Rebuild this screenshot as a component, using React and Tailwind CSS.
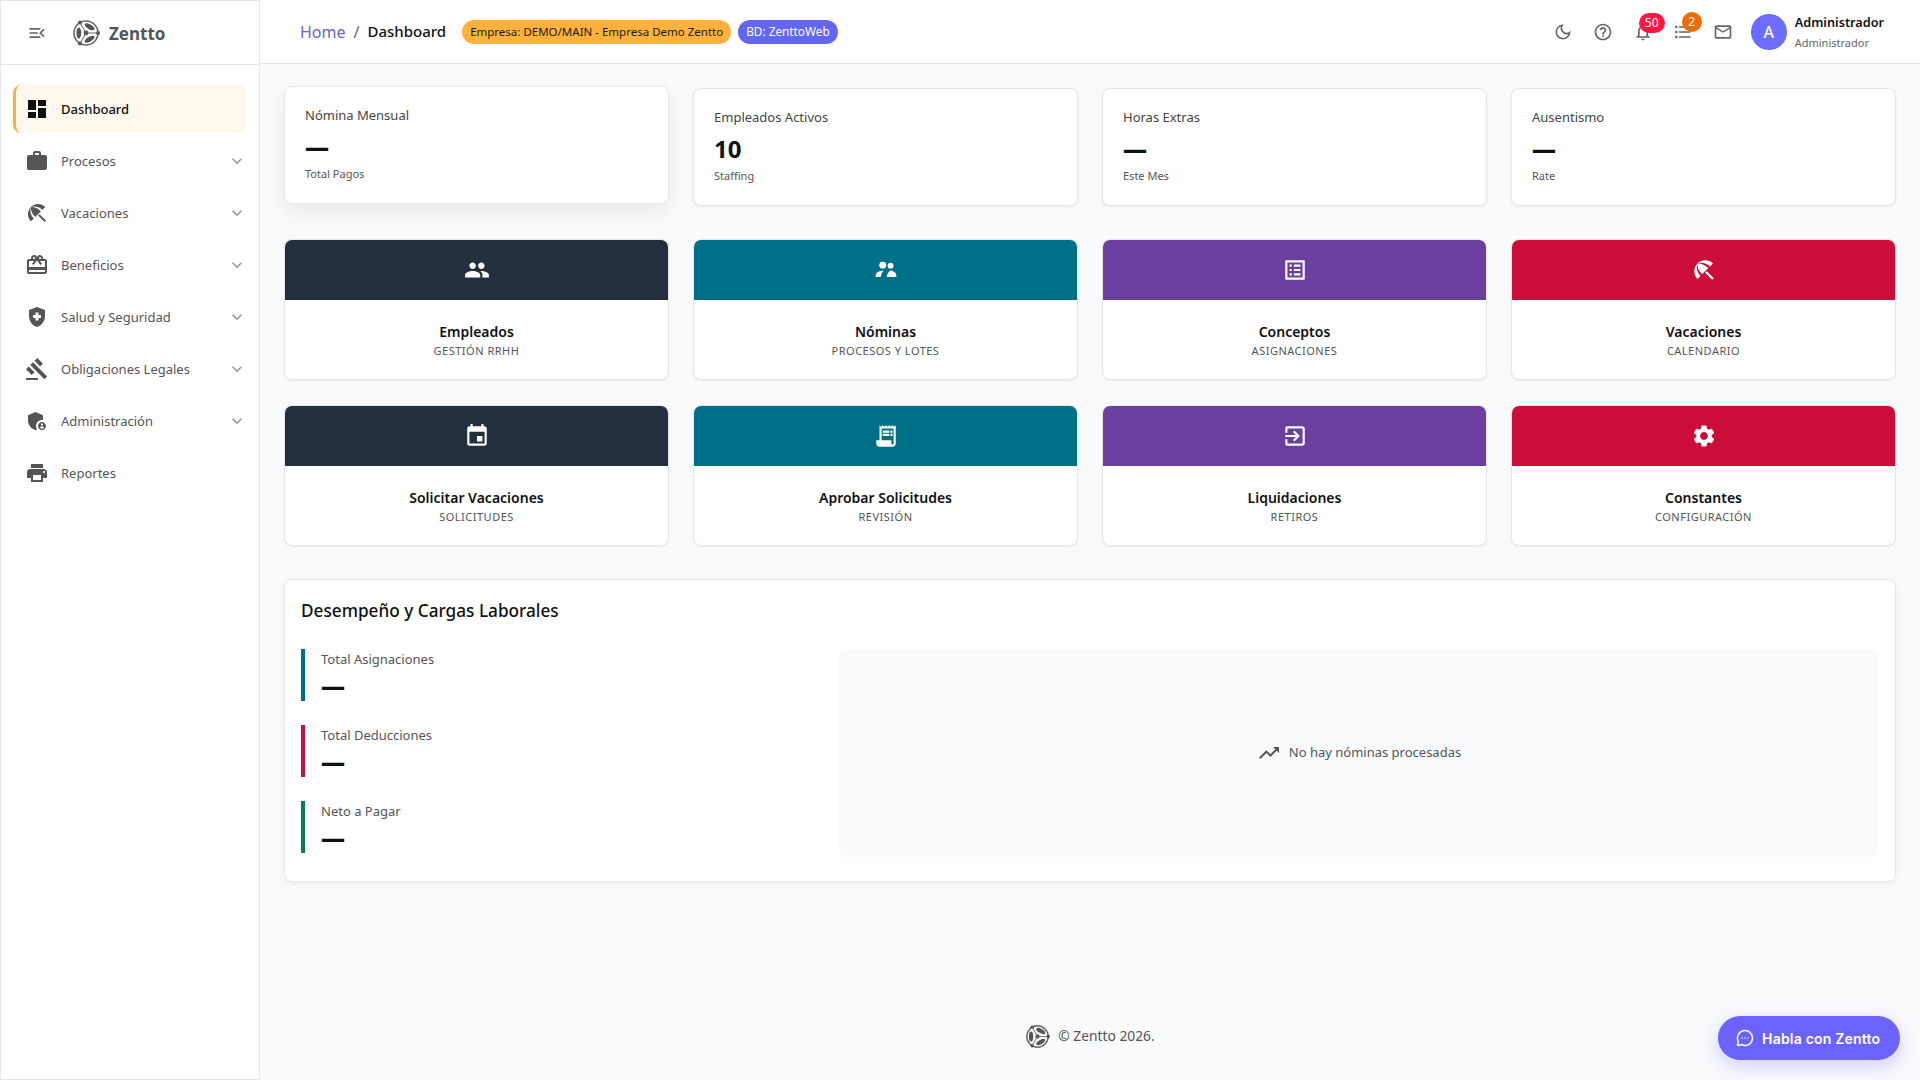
import React from "react";
import {
  MdMenuOpen, MdDashboard, MdWork, MdBeachAccess, MdRedeem, MdHealthAndSafety, MdGavel,
  MdAdminPanelSettings, MdPrint, MdExpandMore, MdOutlineDarkMode, MdHelpOutline, MdNotificationsNone,
  MdFormatListBulleted, MdMailOutline, MdPeople, MdOutlineListAlt, MdEvent, MdReceiptLong,
  MdOutlineExitToApp, MdSettings, MdTrendingUp,
} from "react-icons/md";
import { MessageCircleMore } from "lucide-react";

function Logo({ className }) {
  return (
    <svg viewBox="0 0 28 28" className={className} fill="none">
      <circle cx="14" cy="14" r="12" stroke="#666" strokeWidth="1.6" />
      <g fill="#555">
        <ellipse cx="6.8" cy="14" rx="2.4" ry="5.6" />
        <ellipse cx="17.6" cy="7.8" rx="2.4" ry="5.6" transform="rotate(120 17.6 7.8)" />
        <ellipse cx="17.6" cy="20.2" rx="2.4" ry="5.6" transform="rotate(60 17.6 20.2)" />
        <circle cx="26" cy="14" r="2" />
        <circle cx="8" cy="3.6" r="2" />
        <circle cx="8" cy="24.4" r="2" />
        <circle cx="14" cy="14" r="2.4" />
      </g>
      <path d="M14 14 L26 14 M14 14 L8 3.6 M14 14 L8 24.4" stroke="#666" strokeWidth="1" />
    </svg>
  );
}

function TeamIcon({ className }) {
  return (
    <svg viewBox="0 0 24 24" className={className} fill="currentColor">
      <circle cx="9" cy="7.5" r="3.2" />
      <circle cx="16.2" cy="8" r="2.7" />
      <path d="M2.5 18.5 v-1.6 C2.5 14.2 6 12.6 9.8 12.4 C8.4 14 7.4 16 7.2 18.5 Z" />
      <path d="M12.6 18.5 H21.5 V17 C21.5 14.6 18.6 12.4 16 12.4 C14.2 13.6 13 16 12.6 18.5 Z" />
    </svg>
  );
}

const nav = [
  { label: "Procesos", Icon: MdWork },
  { label: "Vacaciones", Icon: MdBeachAccess },
  { label: "Beneficios", Icon: MdRedeem },
  { label: "Salud y Seguridad", Icon: MdHealthAndSafety },
  { label: "Obligaciones Legales", Icon: MdGavel },
  { label: "Administración", Icon: MdAdminPanelSettings },
  { label: "Reportes", Icon: MdPrint, noChevron: true },
];

const stats = [
  { label: "Nómina Mensual", value: "—", sub: "Total Pagos", lifted: true },
  { label: "Empleados Activos", value: "10", sub: "Staffing" },
  { label: "Horas Extras", value: "—", sub: "Este Mes" },
  { label: "Ausentismo", value: "—", sub: "Rate" },
];

const actions = [
  { title: "Empleados", sub: "Gestión RRHH", Icon: MdPeople, bg: "bg-[#232f3e]" },
  { title: "Nóminas", sub: "Procesos y Lotes", Icon: TeamIcon, bg: "bg-[#007088]" },
  { title: "Conceptos", sub: "Asignaciones", Icon: MdOutlineListAlt, bg: "bg-[#6b3fa0]" },
  { title: "Vacaciones", sub: "Calendario", Icon: MdBeachAccess, bg: "bg-[#cc0c39]" },
  { title: "Solicitar Vacaciones", sub: "Solicitudes", Icon: MdEvent, bg: "bg-[#232f3e]" },
  { title: "Aprobar Solicitudes", sub: "Revisión", Icon: MdReceiptLong, bg: "bg-[#007088]" },
  { title: "Liquidaciones", sub: "Retiros", Icon: MdOutlineExitToApp, bg: "bg-[#6b3fa0]" },
  { title: "Constantes", sub: "Configuración", Icon: MdSettings, bg: "bg-[#cc0c39]" },
];

const metrics = [
  { label: "Total Asignaciones", border: "border-[#007088]" },
  { label: "Total Deducciones", border: "border-[#c2134f]" },
  { label: "Neto a Pagar", border: "border-[#067d62]" },
];

export default function App() {
  return (
    <div className="relative flex h-screen w-full overflow-hidden bg-[#f9fafc] font-['Noto_Sans',sans-serif] text-[#0f1111]">
      <aside className="flex w-[260px] shrink-0 flex-col border border-[#e5e7eb] bg-white">
        <div className="flex h-[64px] shrink-0 items-center border-b border-[#e5e7eb] pl-[26px]">
          <MdMenuOpen className="size-[20px] text-[#666]" />
          <Logo className="ml-[25px] size-[28px]" />
          <span className="ml-[9px] mt-[2px] text-[17px] leading-none font-bold text-[#555]">Zentto</span>
        </div>
        <nav className="flex flex-col gap-[4px] px-[12px] pt-[20px]">
          <div className="flex h-[48px] items-center rounded-[8px] border-l-[3px] border-[#f5b04c] bg-[#fff8ee] pl-[9px]">
            <MdDashboard className="size-[24px] text-[#0f1111]" />
            <span className="ml-[12px] mt-[2px] text-[13px] font-medium">Dashboard</span>
          </div>
          {nav.map(({ label, Icon, noChevron }) => (
            <div key={label} className="flex h-[48px] items-center pl-[12px]">
              <Icon className="size-[24px] text-[#555]" />
              <span className="ml-[12px] mt-[2px] text-[13px] text-[#555]">{label}</span>
              {!noChevron && <MdExpandMore className="ml-auto size-[20px] text-[#999]" />}
            </div>
          ))}
        </nav>
      </aside>

      <div className="flex min-w-0 flex-1 flex-col">
        <header className="flex h-[64px] shrink-0 items-center border-b border-[#e5e7eb] bg-white pl-[40px] pr-[36px]">
          <span className="text-[16px] text-[#6c63c7]">Home</span>
          <span className="mx-[8px] text-[16px] text-[#666]">/</span>
          <span className="text-[15px] font-medium">Dashboard</span>
          <span className="ml-[16px] flex h-[24px] items-center rounded-full bg-[#ffb13d] px-[8px] text-[11.5px] text-[#1a1a1a]">
            Empresa: DEMO/MAIN - Empresa Demo Zentto
          </span>
          <span className="ml-[7px] flex h-[24px] items-center rounded-full bg-[#6366f1] px-[8px] text-[11.8px] text-white">
            BD: ZenttoWeb
          </span>
          <div className="ml-auto flex items-center">
            <MdOutlineDarkMode className="size-[20px] text-[#666]" />
            <MdHelpOutline className="ml-[20px] size-[20px] text-[#666]" />
            <div className="relative ml-[20px] size-[20px]">
              <MdNotificationsNone className="size-[20px] text-[#666]" />
              <span className="absolute -top-[9px] left-[6px] flex h-[20px] w-[26px] items-center justify-center rounded-full bg-[#ff1744] text-[12px] text-white">50</span>
            </div>
            <div className="relative ml-[20px] size-[20px]">
              <MdFormatListBulleted className="size-[20px] text-[#666]" />
              <span className="absolute -top-[10px] left-[9px] flex size-[20px] items-center justify-center rounded-full bg-[#ed6c02] text-[12px] text-white">2</span>
            </div>
            <MdMailOutline className="ml-[20px] size-[20px] text-[#666]" />
            <div className="ml-[18px] flex size-[36px] items-center justify-center rounded-full bg-[#6c6cff] text-[16px] font-medium text-white">A</div>
            <div className="ml-[8px] flex flex-col">
              <span className="text-[12.7px] leading-[20px] font-semibold">Administrador</span>
              <span className="mt-[2px] text-[11px] leading-[18px] text-[#666]">Administrador</span>
            </div>
          </div>
        </header>

        <main className="flex flex-1 flex-col px-[24px] pt-[24px]">
          <div className="grid grid-cols-4 gap-[24px]">
            {stats.map((s) => (
              <div
                key={s.label}
                className={
                  s.lifted
                    ? "-mt-[2px] mb-[2px] flex h-[118px] flex-col rounded-[8px] border border-[#e5e7eb] bg-white pl-[20px] pt-[18px] shadow-[0_8px_20px_rgba(0,0,0,0.07)]"
                    : "flex h-[118px] flex-col rounded-[8px] border border-[#e5e7eb] bg-white pl-[20px] pt-[18px] shadow-[0_1px_3px_rgba(0,0,0,0.08)]"
                }
              >
                <span className="text-[13px] leading-[20px] text-[#444]">{s.label}</span>
                <span className={s.value === "10" ? "mt-[6px] text-[24px] leading-[32px] font-bold" : "mt-[6px] text-[24px] leading-[32px] font-black"}>{s.value}</span>
                <span className="mt-[2px] text-[11px] leading-[18px] text-[#555]">{s.sub}</span>
              </div>
            ))}
          </div>

          <div className="mt-[33px] grid grid-cols-4 gap-x-[24px] gap-y-[25px]">
            {actions.map(({ title, sub, Icon, bg }) => (
              <div key={title} className="flex h-[141px] flex-col overflow-hidden rounded-[8px] border border-[#e5e7eb] bg-white shadow-[0_1px_2px_rgba(0,0,0,0.06)]">
                <div className={`flex h-[60px] shrink-0 items-center justify-center ${bg}`}>
                  <Icon className="size-[26px] text-white" />
                </div>
                <div className="flex flex-1 flex-col items-center pt-[22px]">
                  <span className="text-[14px] leading-[20px] font-semibold">{title}</span>
                  <span className="mt-[1px] text-[11px] leading-[16px] tracking-[0.5px] text-[#555] uppercase">{sub}</span>
                </div>
              </div>
            ))}
          </div>

          <section className="mt-[33px] flex h-[303px] flex-col rounded-[8px] border border-[#e5e7eb] bg-white px-[16px] pt-[19px] shadow-[0_2px_6px_rgba(0,0,0,0.06)]">
            <h2 className="text-[17.2px] leading-[24px] font-medium">Desempeño y Cargas Laborales</h2>
            <div className="mt-[26px] grid grid-cols-[514px_1fr] gap-[24px]">
              <div className="flex flex-col gap-[24px]">
                {metrics.map((m) => (
                  <div key={m.label} className={`flex h-[52px] flex-col border-l-4 pl-[16px] ${m.border}`}>
                    <span className="text-[13px] leading-[20px] text-[#555]">{m.label}</span>
                    <span className="mt-[3px] text-[24px] leading-[28px] font-black">—</span>
                  </div>
                ))}
              </div>
              <div className="flex h-[208px] items-center justify-center gap-[8px] rounded-[8px] bg-[#f9fafb] text-[13px] text-[#555]">
                <MdTrendingUp className="size-[24px] text-[#555]" />
                No hay nóminas procesadas
              </div>
            </div>
          </section>

          <footer className="mt-auto flex items-center justify-center gap-[8px] pb-[31px] text-[13.8px] text-[#555]">
            <Logo className="size-[25px]" />
            © Zentto 2026.
          </footer>
        </main>
      </div>

      <button className="absolute bottom-[20px] right-[20px] flex h-[44px] w-[182px] items-center gap-[8px] rounded-full bg-[#6c63ff] pl-[18px] font-['Inter',sans-serif] text-[14px] font-semibold tracking-[0.2px] text-white shadow-[0_6px_18px_rgba(108,99,255,0.3)]">
        <MessageCircleMore className="size-[18px]" />
        Habla con Zentto
      </button>
    </div>
  );
}
